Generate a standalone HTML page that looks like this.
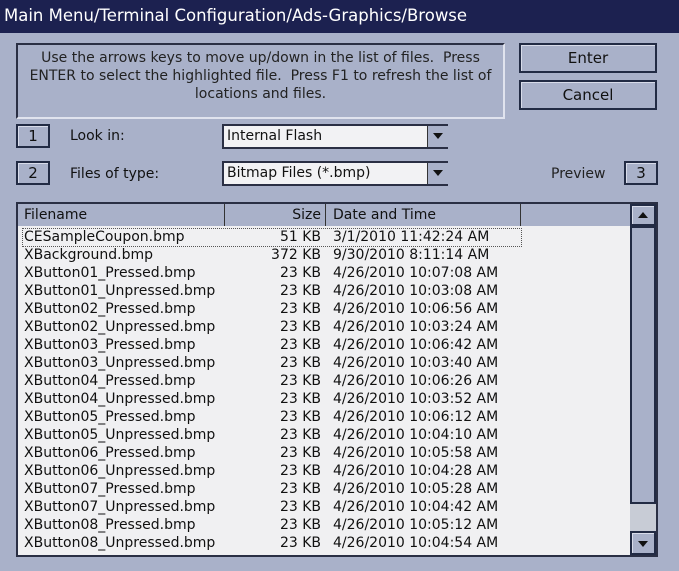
<!DOCTYPE html>
<html><head><style>
*{margin:0;padding:0;box-sizing:border-box}
body{width:679px;height:571px;background:#a9b1c9;font-family:"DejaVu Sans","Liberation Sans",sans-serif;position:relative;overflow:hidden;color:#111}
.a{position:absolute}
.btn{position:absolute;background:#a9b1c9;border:2px solid #222b44;box-shadow:inset 1px 1px 0 #d8dcea;display:flex;align-items:center;justify-content:center;font-size:15px}
.combo{position:absolute;background:#f2f2f4;border:2px solid #2a2f44;border-right:none;font-size:14px;padding-left:3px;line-height:20px}
.dd{position:absolute;right:0;top:0;width:21px;height:100%;background:#a9b1c9;border-left:1px solid #333}
.dd:after{content:"";position:absolute;left:5px;top:7px;border:5px solid transparent;border-top:6px solid #111}
.row{position:absolute;left:0;height:18px;font-size:14px;line-height:18px;width:610px}
.row span{position:absolute}
</style></head><body>
<div class="a" style="left:0;top:0;width:679px;height:33px;background:#1c2150;color:#fff;font-size:16.5px;line-height:31px;padding-left:4px">Main Menu/Terminal Configuration/Ads-Graphics/Browse</div>
<div class="a" style="left:16px;top:43px;width:489px;height:76px;border:2px solid #2a2f44;border-right-color:#e0e3ee;border-bottom-color:#e0e3ee;text-align:center;font-size:14px;line-height:18px;padding-top:4px;color:#222">Use the arrows keys to move up/down in the list of files.&nbsp; Press ENTER to select the highlighted file.&nbsp; Press F1 to refresh the list of locations and files.</div>
<div class="btn" style="left:519px;top:43px;width:138px;height:30px">Enter</div>
<div class="btn" style="left:519px;top:80px;width:138px;height:30px">Cancel</div>
<div class="btn" style="left:16px;top:124px;width:34px;height:24px">1</div>
<div class="a" style="left:70px;top:128px;font-size:14px">Look in:</div>
<div class="combo" style="left:222px;top:124px;width:226px;height:25px">Internal Flash<div class="dd"></div></div>
<div class="btn" style="left:16px;top:161px;width:34px;height:24px">2</div>
<div class="a" style="left:70px;top:166px;font-size:14px">Files of type:</div>
<div class="combo" style="left:222px;top:161px;width:226px;height:25px">Bitmap Files (*.bmp)<div class="dd"></div></div>
<div class="a" style="left:551px;top:166px;font-size:14px;color:#222">Preview</div>
<div class="btn" style="left:624px;top:161px;width:34px;height:24px">3</div>
<div class="a" style="left:16px;top:202px;width:642px;height:355px;background:#f0f0f2;border:2px solid #2a2f44;overflow:hidden">
 <div class="a" style="left:0;top:0;width:612px;height:22px;background:#a9b1c9;font-size:14px;line-height:22px">
  <span class="a" style="left:6px">Filename</span>
  <span class="a" style="left:206px;width:1px;height:22px;background:#333"></span>
  <span class="a" style="left:250px;width:53px;text-align:right">Size</span>
  <span class="a" style="left:307px;width:1px;height:22px;background:#333"></span>
  <span class="a" style="left:315px">Date and Time</span>
  <span class="a" style="left:502px;width:1px;height:22px;background:#333"></span>
 </div>
 <div class="a" style="left:4px;top:24px;width:500px;height:19px;border:1px dotted #555"></div>
 <div id="rows" class="a" style="left:0;top:24px"></div>
 <div class="a" style="left:612px;top:0;width:26px;height:351px;background:#c8ccd6">
  <div class="btn" style="left:0;top:0;width:26px;height:22px"><span style="border:5px solid transparent;border-bottom:6px solid #111;margin-top:-6px"></span></div>
  <div class="a" style="left:0;top:22px;width:26px;height:278px;background:#a9b1c9;border:2px solid #222b44"></div>
  <div class="btn" style="left:0;top:327px;width:26px;height:24px"><span style="border:5px solid transparent;border-top:6px solid #111;margin-top:6px"></span></div>
 </div>
</div>
<script>
var d=[["CESampleCoupon.bmp","51 KB","3/1/2010 11:42:24 AM"],["XBackground.bmp","372 KB","9/30/2010 8:11:14 AM"],["XButton01_Pressed.bmp","23 KB","4/26/2010 10:07:08 AM"],["XButton01_Unpressed.bmp","23 KB","4/26/2010 10:03:08 AM"],["XButton02_Pressed.bmp","23 KB","4/26/2010 10:06:56 AM"],["XButton02_Unpressed.bmp","23 KB","4/26/2010 10:03:24 AM"],["XButton03_Pressed.bmp","23 KB","4/26/2010 10:06:42 AM"],["XButton03_Unpressed.bmp","23 KB","4/26/2010 10:03:40 AM"],["XButton04_Pressed.bmp","23 KB","4/26/2010 10:06:26 AM"],["XButton04_Unpressed.bmp","23 KB","4/26/2010 10:03:52 AM"],["XButton05_Pressed.bmp","23 KB","4/26/2010 10:06:12 AM"],["XButton05_Unpressed.bmp","23 KB","4/26/2010 10:04:10 AM"],["XButton06_Pressed.bmp","23 KB","4/26/2010 10:05:58 AM"],["XButton06_Unpressed.bmp","23 KB","4/26/2010 10:04:28 AM"],["XButton07_Pressed.bmp","23 KB","4/26/2010 10:05:28 AM"],["XButton07_Unpressed.bmp","23 KB","4/26/2010 10:04:42 AM"],["XButton08_Pressed.bmp","23 KB","4/26/2010 10:05:12 AM"],["XButton08_Unpressed.bmp","23 KB","4/26/2010 10:04:54 AM"]];
var h="";d.forEach(function(r,i){h+='<div class="row" style="top:'+(i*18)+'px"><span style="left:6px">'+r[0]+'</span><span style="left:200px;width:103px;text-align:right">'+r[1]+'</span><span style="left:315px">'+r[2]+'</span></div>'});
document.getElementById("rows").innerHTML=h;
</script>
</body></html>
